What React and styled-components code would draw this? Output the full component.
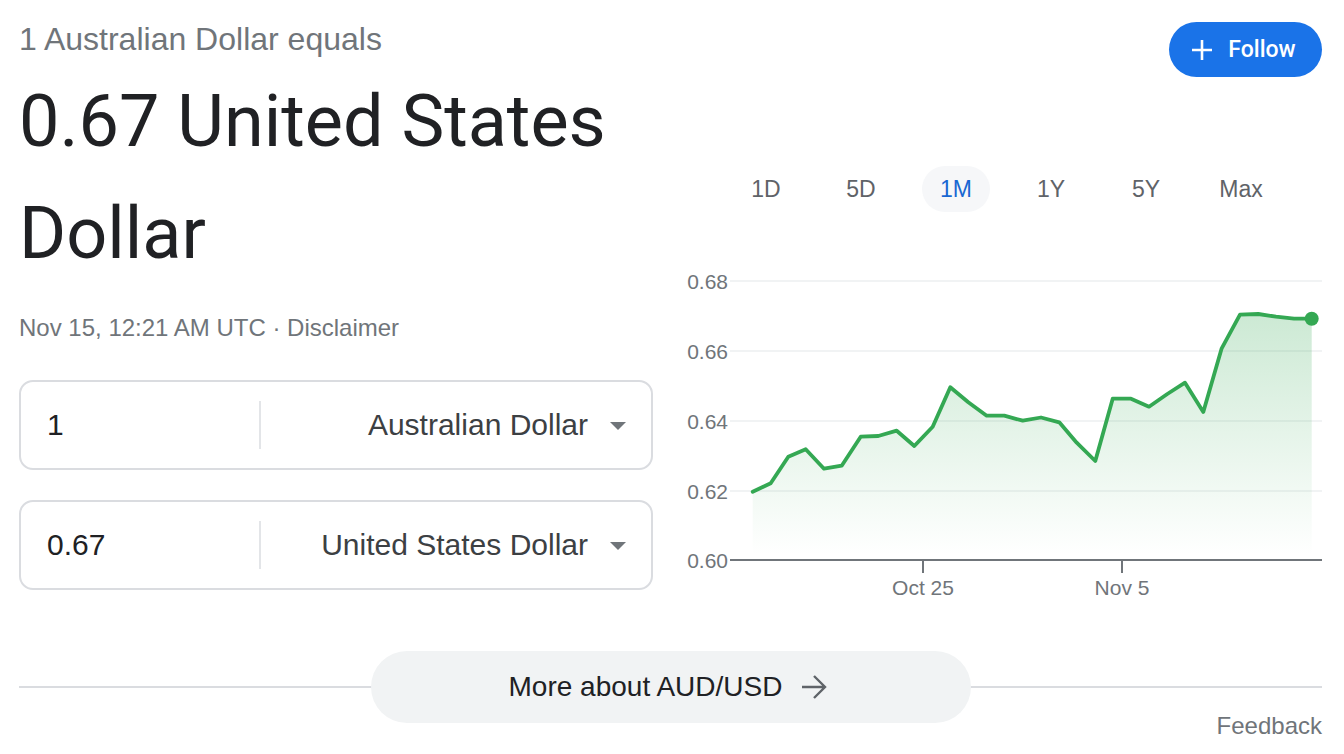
import React from "react";
import styled, { createGlobalStyle } from "styled-components";

const Global = createGlobalStyle`
  html, body { margin: 0; padding: 0; background: #fff; }
  body { font-family: "Liberation Sans", Arial, sans-serif; color: #202124; }
`;

const Page = styled.div`
  width: 1303px;
  margin-left: 19px;
  padding-top: 21px;
`;

const Main = styled.div`
  display: grid;
  grid-template-columns: 634px 642px;
  column-gap: 27px;
`;

const LeftCol = styled.div`
  display: flex;
  flex-direction: column;
`;

const RightCol = styled.div`
  display: flex;
  flex-direction: column;
`;

const Subtitle = styled.div`
  font-size: 32px;
  line-height: 36px;
  color: #70757a;
`;

const Title = styled.div`
  margin-top: 9px;
  font-family: Roboto, "Noto Sans", sans-serif;
  font-size: 72px;
  line-height: 112px;
  color: #202124;
`;

const DateLine = styled.div`
  margin-top: 24px;
  font-size: 24px;
  line-height: 28px;
  color: #70757a;
`;

const Converter = styled.div`
  margin-top: ${(p) => p.$mt}px;
  height: 90px;
  box-sizing: border-box;
  border: 2px solid #dadce0;
  border-radius: 14px;
  display: flex;
  align-items: center;
`;

const ValueField = styled.div`
  width: 238px;
  box-sizing: border-box;
  padding-left: 26px;
  font-size: 30px;
  color: #202124;
`;

const Divider = styled.div`
  width: 2px;
  height: 48px;
  background: #e3e5e8;
`;

const CurrencySelect = styled.div`
  flex: 1;
  display: flex;
  justify-content: flex-end;
  align-items: center;
  gap: 22px;
  padding-right: 25px;
  font-size: 30px;
  color: #3c4043;
`;

const Caret = styled.span`
  width: 0;
  height: 0;
  border-left: 8px solid transparent;
  border-right: 8px solid transparent;
  border-top: 8px solid #70757a;
  margin-top: 2px;
`;

const FollowButton = styled.button`
  align-self: flex-end;
  margin-top: 1px;
  height: 55px;
  width: 153px;
  border: none;
  border-radius: 28px;
  background: #1a73e8;
  color: #fff;
  display: flex;
  align-items: center;
  justify-content: center;
  gap: 15px;
  padding: 0 4px 0 0;
  font-family: Roboto, "Noto Sans", sans-serif;
  font-weight: 500;
  font-size: 23px;
  cursor: pointer;
`;

const Tabs = styled.div`
  margin-top: 89px;
  margin-left: 52px;
  display: flex;
  gap: 27px;
`;

const Tab = styled.div`
  width: 68px;
  height: 46px;
  border-radius: 23px;
  display: flex;
  align-items: center;
  justify-content: center;
  font-size: 23px;
  color: ${(p) => (p.$active ? "#1967d2" : "#5f6368")};
  background: ${(p) => (p.$active ? "#f6f7f9" : "transparent")};
`;

const ChartSvg = styled.svg`
  display: block;
  margin-top: 48px;
`;

const Bottom = styled.div`
  margin-top: 51px;
  position: relative;
  display: flex;
  align-items: center;
  justify-content: center;
  height: 72px;
`;

const Rule = styled.div`
  position: absolute;
  left: 0;
  right: 0;
  top: 35px;
  height: 2px;
  background: #dadce0;
`;

const MoreButton = styled.button`
  position: relative;
  width: 600px;
  height: 72px;
  border: none;
  border-radius: 36px;
  background: #f1f3f4;
  display: flex;
  align-items: center;
  justify-content: center;
  gap: 18px;
  font-family: "Liberation Sans", Arial, sans-serif;
  font-size: 28px;
  color: #202124;
  padding: 0 4px 0 0;
  cursor: pointer;
`;

const Feedback = styled.div`
  margin-top: -11px;
  text-align: right;
  font-size: 24px;
  line-height: 28px;
  color: #70757a;
`;

const points = [
  [72.7, 231.7], [90.7, 223.3], [108.3, 196.7], [125.7, 189.3], [144, 208.7],
  [161.7, 205.7], [180.7, 176.7], [198.3, 176], [216.7, 170.7], [234.3, 186],
  [252.7, 166.7], [270.3, 127.3], [288.3, 142.3], [306.7, 155.7], [324.3, 155.7],
  [342.7, 160.7], [361, 157.5], [379.3, 162.3], [396.7, 182.7], [415.3, 201],
  [432.7, 138.7], [451, 138.7], [469, 146.7], [487.3, 134], [505, 122.7],
  [523.3, 152], [541.7, 88.3], [560, 54.7], [578.3, 54], [596, 56.7],
  [614, 58.7], [631.7, 58.7],
];

const grid = [
  { y: 21, label: "0.68" },
  { y: 91, label: "0.66" },
  { y: 161, label: "0.64" },
  { y: 231, label: "0.62" },
];

function Chart() {
  const line = points.map((p, i) => `${i ? "L" : "M"}${p[0]} ${p[1]}`).join(" ");
  const last = points[points.length - 1];
  const area = `${line} L${last[0]} 300 L${points[0][0]} 300 Z`;
  return (
    <ChartSvg width="642" height="340" viewBox="0 0 642 340">
      <defs>
        <linearGradient id="fillG" x1="0" y1="54" x2="0" y2="295" gradientUnits="userSpaceOnUse">
          <stop offset="0" stopColor="#34a853" stopOpacity="0.25" />
          <stop offset="1" stopColor="#34a853" stopOpacity="0" />
        </linearGradient>
      </defs>
      {grid.map((g) => (
        <line key={g.y} x1="50" x2="642" y1={g.y} y2={g.y} stroke="#f1f3f4" strokeWidth="2" />
      ))}
      <path d={area} fill="url(#fillG)" />
      <path d={line} fill="none" stroke="#34a853" strokeWidth="3.8" strokeLinejoin="round" strokeLinecap="round" />
      <circle cx={last[0]} cy={last[1]} r="7" fill="#34a853" />
      <line x1="50" x2="642" y1="300" y2="300" stroke="#70757a" strokeWidth="2" />
      <line x1="243" x2="243" y1="300" y2="313" stroke="#70757a" strokeWidth="2" />
      <line x1="442" x2="442" y1="300" y2="313" stroke="#70757a" strokeWidth="2" />
      <g fontFamily="Liberation Sans, Arial, sans-serif" fontSize="21" fill="#70757a">
        {grid.map((g) => (
          <text key={g.label} x="48" y={g.y + 7.5} textAnchor="end">{g.label}</text>
        ))}
        <text x="48" y="307.5" textAnchor="end">0.60</text>
        <text x="243" y="335" textAnchor="middle">Oct 25</text>
        <text x="442" y="335" textAnchor="middle">Nov 5</text>
      </g>
    </ChartSvg>
  );
}

const PlusIcon = () => (
  <svg width="22" height="22" viewBox="0 0 22 22">
    <path d="M11 1v20M1 11h20" stroke="#fff" strokeWidth="2.6" fill="none" />
  </svg>
);

const ArrowIcon = () => (
  <svg width="28" height="28" viewBox="0 0 28 28">
    <path d="M2 14h23M14 3l11 11-11 11" stroke="#5f6368" strokeWidth="2.4" fill="none" />
  </svg>
);

export default function App() {
  const tabs = ["1D", "5D", "1M", "1Y", "5Y", "Max"];
  return (
    <>
      <Global />
      <Page>
        <Main>
          <LeftCol>
            <Subtitle>1 Australian Dollar equals</Subtitle>
            <Title>0.67 United States Dollar</Title>
            <DateLine>Nov 15, 12:21 AM UTC · Disclaimer</DateLine>
            <Converter $mt={38}>
              <ValueField>1</ValueField>
              <Divider />
              <CurrencySelect>
                Australian Dollar
                <Caret />
              </CurrencySelect>
            </Converter>
            <Converter $mt={30}>
              <ValueField>0.67</ValueField>
              <Divider />
              <CurrencySelect>
                United States Dollar
                <Caret />
              </CurrencySelect>
            </Converter>
          </LeftCol>
          <RightCol>
            <FollowButton>
              <PlusIcon />
              Follow
            </FollowButton>
            <Tabs>
              {tabs.map((t) => (
                <Tab key={t} $active={t === "1M"}>{t}</Tab>
              ))}
            </Tabs>
            <Chart />
          </RightCol>
        </Main>
        <Bottom>
          <Rule />
          <MoreButton>
            More about AUD/USD
            <ArrowIcon />
          </MoreButton>
        </Bottom>
        <Feedback>Feedback</Feedback>
      </Page>
    </>
  );
}
